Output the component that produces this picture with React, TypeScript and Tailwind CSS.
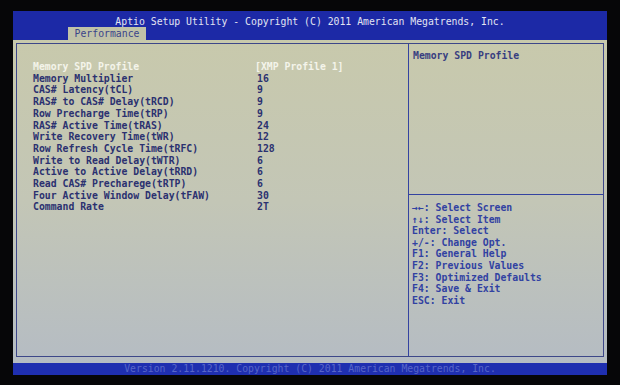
import React from "react";

const settings: [string, string][] = [
  ["Memory SPD Profile", "[XMP Profile 1]"],
  ["Memory Multiplier", "16"],
  ["CAS# Latency(tCL)", "9"],
  ["RAS# to CAS# Delay(tRCD)", "9"],
  ["Row Precharge Time(tRP)", "9"],
  ["RAS# Active Time(tRAS)", "24"],
  ["Write Recovery Time(tWR)", "12"],
  ["Row Refresh Cycle Time(tRFC)", "128"],
  ["Write to Read Delay(tWTR)", "6"],
  ["Active to Active Delay(tRRD)", "6"],
  ["Read CAS# Precharege(tRTP)", "6"],
  ["Four Active Window Delay(tFAW)", "30"],
  ["Command Rate", "2T"],
];

const helpKeys = [
  "→←: Select Screen",
  "↑↓: Select Item",
  "Enter: Select",
  "+/-: Change Opt.",
  "F1: General Help",
  "F2: Previous Values",
  "F3: Optimized Defaults",
  "F4: Save & Exit",
  "ESC: Exit",
];

export default function App() {
  return (
    <div className="w-[620px] h-[385px] bg-[#060608] pt-[11px] pl-[13px] font-['DejaVu_Sans_Mono','Liberation_Mono',monospace] text-[9.8px] overflow-hidden">
      <div className="w-[594px] flex flex-col">
        {/* header */}
        <div className="h-[29px] bg-[#1c29a6] flex flex-col">
          <div className="h-[16px] pt-[5px] leading-[12px] text-center text-[#e2e4f2] whitespace-pre">
            Aptio Setup Utility - Copyright (C) 2011 American Megatrends, Inc.
          </div>
          <div className="ml-[55px] w-[78px] h-[13px] bg-[#c0c2a8] text-[#3a448a] leading-[13px] text-center">
            Performance
          </div>
        </div>

        {/* body */}
        <div className="h-[323px] bg-linear-to-b from-[#c8c9ac] via-[#c3c6b6] to-[#b5bcc3] pt-[3px] px-[3px] pb-[6px]">
          <div className="h-full border border-[#3d4789] flex">
            <div className="w-[392px] border-r border-[#3443a0] pt-[17px] pl-[16px] leading-[11.7px] font-bold text-[#2b3170]">
              {settings.map(([label, value], i) => (
                <div key={label} className={"flex " + (i === 0 ? "text-[#f4f4ea]" : "")}>
                  <span className="w-[222px] whitespace-pre">{label}</span>
                  <span className={"whitespace-pre " + (i === 0 ? "" : "pl-[2px]")}>{value}</span>
                </div>
              ))}
            </div>
            <div className="flex-1 flex flex-col font-bold text-[#3141a2] leading-[11.6px]">
              <div className="h-[151px] border-b border-[#3443a0] pt-[6px] pl-[4px] text-[#383e80]">
                Memory SPD Profile
              </div>
              <div className="pt-[7px] pl-[3px]">
                {helpKeys.map((k) => (
                  <div key={k} className="whitespace-pre">
                    {k}
                  </div>
                ))}
              </div>
            </div>
          </div>
        </div>

        {/* footer */}
        <div className="h-[12px] bg-[#1f2fb0] text-center text-[#5866c8] leading-[12px] whitespace-pre">
          Version 2.11.1210. Copyright (C) 2011 American Megatrends, Inc.
        </div>
      </div>
    </div>
  );
}
